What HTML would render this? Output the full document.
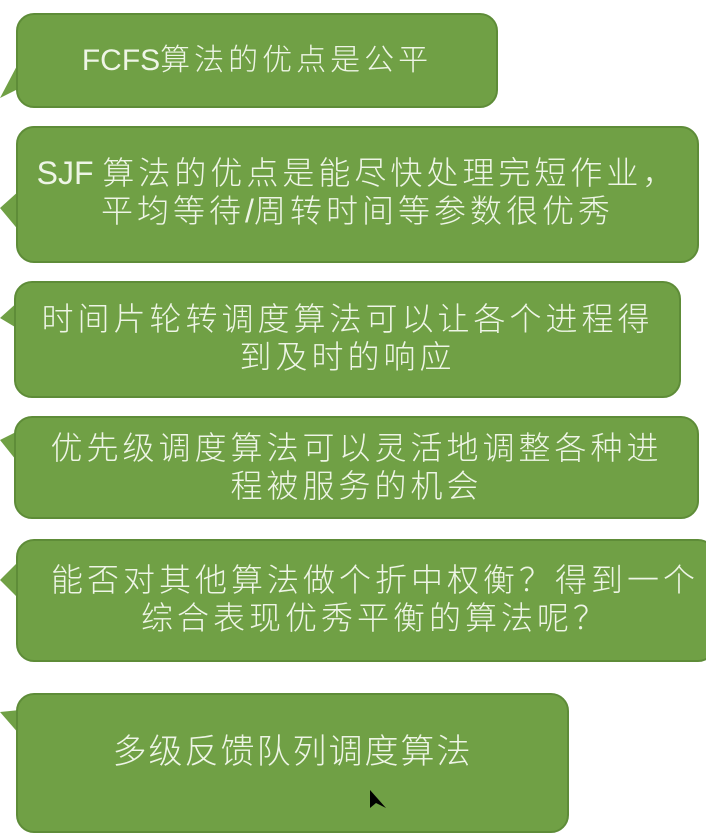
<!DOCTYPE html>
<html><head><meta charset="utf-8"><style>
body{margin:0;width:706px;height:808px;background:#fff;overflow:hidden;position:relative;font-family:"Liberation Sans","Noto Sans CJK SC",sans-serif;}
.b{position:absolute;background:#70a045;border:2px solid #5e8c38;border-radius:18px;color:#eef5e6;text-align:center;display:flex;align-items:center;justify-content:center;flex-direction:column;font-size:32px;font-weight:300;letter-spacing:4px;line-height:38px;box-sizing:border-box;white-space:nowrap;}
.l{letter-spacing:0}
svg{position:absolute;left:0;top:0}
</style></head><body>
<svg width="706" height="808">
<g fill="#70a045">
<polygon points="20,60 0,98 20,88"/>
<polygon points="20,190 0,208 20,232"/>
<polygon points="20,300 0,318 20,330"/>
<polygon points="20,430 0,440 20,465"/>
<polygon points="20,560 0,580 20,600"/>
<polygon points="20,710 0,712 20,735"/>
</g></svg>
<div class="b" style="left:16px;top:13px;width:482px;height:95px;font-size:30px"><div><span class="l">FCFS</span>算法的优点是公平</div></div>
<div class="b" style="left:16px;top:126px;width:683px;height:137px;padding-bottom:6px"><div><span class="l">SJF </span>算法的优点是能尽快处理完短作业，</div><div>平均等待<span class="l">/</span>周转时间等参数很优秀</div></div>
<div class="b" style="left:14px;top:281px;width:667px;height:117px;padding-bottom:4px">时间片轮转调度算法可以让各个进程得<br>到及时的响应</div>
<div class="b" style="left:14px;top:416px;width:685px;height:103px;padding-bottom:2px">优先级调度算法可以灵活地调整各种进<br>程被服务的机会</div>
<div class="b" style="left:16px;top:539px;width:700px;height:123px;padding-bottom:4px;padding-left:18px">能否对其他算法做个折中权衡？得到一个<br>综合表现优秀平衡的算法呢？</div>
<div class="b" style="left:16px;top:693px;width:553px;height:140px;font-size:34px;letter-spacing:2px;padding-bottom:22px">多级反馈队列调度算法</div>
<svg width="706" height="808" style="pointer-events:none"><polygon points="370,790 370,808 376,803 386,808" fill="#000"/></svg>
</body></html>
